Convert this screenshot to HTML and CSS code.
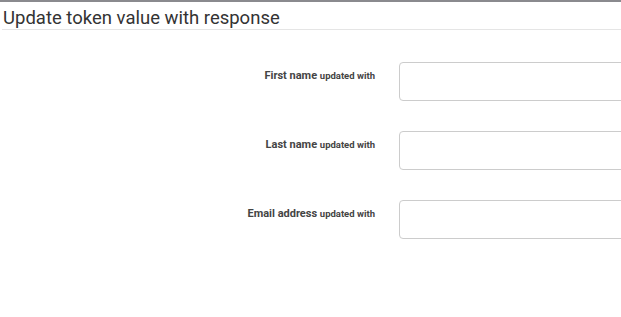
FILE: index.html
```html
<!DOCTYPE html>
<html>
<head>
<meta charset="utf-8">
<link rel="stylesheet" href="styles.css">
</head>
<body>
<div class="panel">
  <h3 class="title">Update token value with response</h3>
  <form class="form">
    <div class="row">
      <label class="label">First name <small>updated with</small></label>
      <input class="input" type="text">
    </div>
    <div class="row">
      <label class="label">Last name <small>updated with</small></label>
      <input class="input" type="text">
    </div>
    <div class="row">
      <label class="label">Email address <small>updated with</small></label>
      <input class="input" type="text">
    </div>
  </form>
</div>
</body>
</html>
```
FILE: styles.css
```css
html, body {
  margin: 0;
  padding: 0;
  background: #fff;
  font-family: Roboto, "Liberation Sans", sans-serif;
  color: #333;
  overflow: hidden;
}
.panel {
  border-top: 2px solid #8a8a8e;
  width: 621px;
  overflow: hidden;
}
.title {
  margin: 0 0 0 2px;
  padding: 5px 0 0 1px;
  height: 22px;
  font-size: 18.5px;
  font-weight: 400;
  line-height: 22px;
  color: #333;
  border-bottom: 1px solid #e5e5e5;
}
.form {
  padding-top: 32px;
}
.row {
  display: grid;
  grid-template-columns: 375px 222px;
  column-gap: 24px;
  margin-bottom: 30px;
}
.label {
  text-align: right;
  font-size: 11px;
  font-weight: 700;
  padding-top: 6px;
  line-height: 15px;
  color: #444;
}
.label small {
  font-size: 9.5px;
}
.input {
  box-sizing: border-box;
  width: 240px;
  height: 39px;
  border: 1px solid #ccc;
  border-radius: 4px;
  margin: 0;
}
```
